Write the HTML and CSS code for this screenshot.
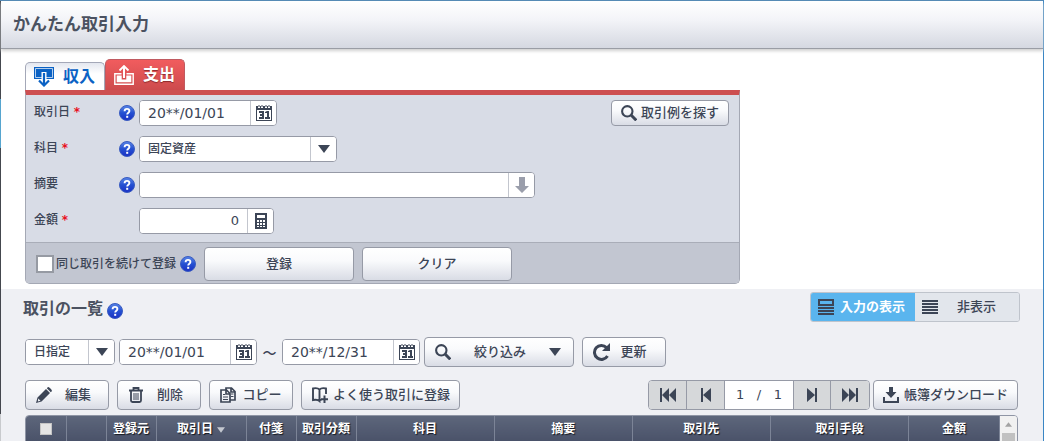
FILE: index.html
```html
<!DOCTYPE html>
<html lang="ja">
<head>
<meta charset="utf-8">
<meta name="viewport" content="width=device-width, initial-scale=1">
<title>かんたん取引入力</title>
<link rel="stylesheet" href="styles.css">
</head>
<body>
<svg class="symbols" aria-hidden="true">
  <defs>
    <linearGradient id="help-fill" x1="0" y1="0" x2="0" y2="1">
      <stop offset="0" stop-color="#5a86e6"/><stop offset=".5" stop-color="#2450d2"/><stop offset="1" stop-color="#1a30c4"/>
    </linearGradient>
    <symbol id="help" viewBox="0 0 16 16">
      <circle cx="8" cy="8" r="7.500" fill="url(#help-fill)" stroke="#3a5cc0"/>
      <path d="M5.600 6.300C5.600 4.700 6.600 3.900 8 3.900s2.400.8 2.400 2.100c0 1.700-2.200 1.700-2.200 3.600" fill="none" stroke="#fff" stroke-width="1.900"/>
      <rect x="7.200" y="10.800" width="2" height="2" fill="#fff"/>
    </symbol>
    <symbol id="calendar" viewBox="0 0 16 16">
      <path d="M0 1h2v2h2V1h1v2h2V1h2v2h2V1h1v2h2V1h2v15H0z" fill="#3c4556"/>
      <path d="M1 5h14v10H1z" fill="#fff"/>
      <path d="M3 6h5v8H3v-2h3v-1H4V9h2V8H3zM9 7l2-1h2v6h1v2H9v-2h2V8H9z" fill="#3c4556"/>
      <path d="M3 0v2M6 0v2M10 0v2M13 0v2" stroke="#3c4556"/>
    </symbol>
    <symbol id="calculator" viewBox="0 0 12 16">
      <path d="M0 0h12v16H0z" fill="#3c4556"/>
      <path d="M2 2h8v3H2zM2 7h2v2H2zM5 7h2v2H5zM8 7h2v2H8zM2 10h2v2H2zM5 10h2v2H5zM8 10h2v2H8zM2 13h2v1H2zM5 13h2v1H5zM8 13h2v1H8z" fill="#fff"/>
    </symbol>
    <symbol id="down-arrow" viewBox="0 0 14 16"><path d="M4 0h6v9h4l-7 7-7-7h4z" fill="#9a9eab"/></symbol>
    <symbol id="triangle" viewBox="0 0 12 8"><path d="M0 0h12L6 8z" fill="currentColor"/></symbol>
    <symbol id="search" viewBox="0 0 16 16"><circle cx="6.300" cy="6.300" r="5.200" fill="none" stroke="currentColor" stroke-width="2.100"/><path d="M10.300 10.300l5 5" stroke="currentColor" stroke-width="3"/></symbol>
    <symbol id="income" viewBox="0 0 20 20">
      <path d="M0 0h20v12H0z" fill="#0b62c4"/>
      <path d="M1.500 1.500h17v9h-17z" fill="none" stroke="#fff" stroke-width=".7"/>
      <path d="M7.500 5h5v7h-5z" fill="#fff"/>
      <path d="M10 6v11" stroke="#0b62c4" stroke-width="2.200"/>
      <path d="M5 13.500l5 5 5-5" fill="none" stroke="#0b62c4" stroke-width="2.200"/>
    </symbol>
    <symbol id="expense" viewBox="0 0 20 20">
      <path d="M7.500 8.700H.8v10.500h18.400V8.700h-6.700" fill="none" stroke="#fff" stroke-width="1.400"/>
      <path d="M2.700 10.500h5v4h4.600v-4h5v6.800H2.700z" fill="#fff"/>
      <path d="M10 13V2" stroke="#fff" stroke-width="2"/>
      <path d="M5.500 5.500L10 1l4.500 4.500" fill="none" stroke="#fff" stroke-width="1.800"/>
    </symbol>
    <symbol id="pencil" viewBox="0 0 16 16"><path d="M0 16l1.500-5.500L10 2l4 4-8.500 8.500zM10.800 1.200L12 0c1 0 4 2.500 4 4l-1.200 1.200z" fill="currentColor"/><path d="M2.300 11.500l2.200 2.200-2.700.8z" fill="#eef0f4"/></symbol>
    <symbol id="trash" viewBox="0 0 14 16"><path d="M0 3.500h14" stroke="currentColor" stroke-width="2"/><path d="M4.500 3V1h5v2M2 4v9.500q0 1.500 1.500 1.500h7q1.500 0 1.500-1.500V4" fill="none" stroke="currentColor" stroke-width="1.800"/><path d="M5 6v7M7 6v7M9 6v7" stroke="currentColor"/></symbol>
    <symbol id="copy" viewBox="0 0 16 16"><path d="M6 3V1h5.500L15 4.500V13h-5M11 1v4h4M1 3h5.500L10 6.500V15H1zM6 3v4h4" fill="none" stroke="currentColor" stroke-width="1.700"/><path d="M3 7.500h2M3 10h5M3 12.500h5M11 7h2.500M11 9.500h2.500" stroke="currentColor" stroke-width="1.200"/></symbol>
    <symbol id="book-plus" viewBox="0 0 16 16"><path d="M7.500 14V2.500C6 1 3 1 1 1.500V13c2.500-.5 5-.5 6.500 1zM7.500 2.500C9 1 12 1 14 1.500V7M7.500 13.500l2-1" fill="none" stroke="currentColor" stroke-width="1.900"/><path d="M12.500 8.500V16M9 12.200h7" stroke="currentColor" stroke-width="2"/></symbol>
    <symbol id="refresh" viewBox="0 0 18 18"><path d="M14.500 4.500A7 7 0 1 0 15.500 13" fill="none" stroke="currentColor" stroke-width="3"/><path d="M18 0v8h-8z" fill="currentColor"/></symbol>
    <symbol id="download" viewBox="0 0 16 16"><path d="M6 0h4v5h3.500L8 11 2.500 5H6z" fill="currentColor"/><path d="M1 10v5h14v-5" fill="none" stroke="currentColor" stroke-width="2"/></symbol>
    <symbol id="form-lines" viewBox="0 0 16 16"><path d="M1 1h14v5H1z" fill="none" stroke="currentColor" stroke-width="2"/><path d="M0 9h16M0 12h16M0 15h16" stroke="currentColor" stroke-width="2"/></symbol>
    <symbol id="lines" viewBox="0 0 16 16"><path d="M0 2h16M0 5h16M0 8h16M0 11h16M0 14h16" stroke="currentColor" stroke-width="2"/></symbol>
    <symbol id="first" viewBox="0 0 16 14"><path d="M0 0h2v14H0zM9 0v14L2 7zM16 0v14L9 7z" fill="currentColor"/></symbol>
    <symbol id="prev" viewBox="0 0 10 14"><path d="M0 0h2v14H0zM10 0v14L2 7z" fill="currentColor"/></symbol>
  </defs>
</svg>

<div class="window">
  <header class="titlebar"><h1 class="title">かんたん取引入力</h1></header>

  <main class="main">
    <form class="entry">
      <div class="tabs">
        <button type="button" class="tab tab-income"><svg class="icon20"><use href="#income"/></svg>収入</button>
        <button type="button" class="tab tab-expense"><svg class="icon20"><use href="#expense"/></svg>支出</button>
      </div>
      <div class="panel">
        <div class="fields">
          <div class="rows">
            <div class="row">
              <label class="label" for="date">取引日 <span class="required">*</span></label>
              <svg class="help"><use href="#help"/></svg>
              <span class="field field-date"><input id="date" class="input date" value="20**/01/01"><button type="button" class="addon" aria-label="カレンダー"><svg class="icon16"><use href="#calendar"/></svg></button></span>
            </div>
            <div class="row">
              <label class="label" for="account">科目 <span class="required">*</span></label>
              <svg class="help"><use href="#help"/></svg>
              <span class="field field-account"><select id="account" class="input select"><option>固定資産</option></select><span class="addon"><svg class="caret"><use href="#triangle"/></svg></span></span>
            </div>
            <div class="row">
              <label class="label" for="memo">摘要</label>
              <svg class="help"><use href="#help"/></svg>
              <span class="field field-memo"><input id="memo" class="input"><button type="button" class="addon" aria-label="候補"><svg class="icon16"><use href="#down-arrow"/></svg></button></span>
            </div>
            <div class="row">
              <label class="label" for="amount">金額 <span class="required">*</span></label>
              <span class="help"></span>
              <span class="field field-amount"><input id="amount" class="input amount" value="0"><button type="button" class="addon" aria-label="電卓"><svg class="icon16"><use href="#calculator"/></svg></button></span>
            </div>
          </div>
          <button type="button" class="button button-example"><svg class="icon16"><use href="#search"/></svg>取引例を探す</button>
        </div>
        <div class="actions">
          <input type="checkbox" id="repeat" class="check">
          <label class="repeat-label" for="repeat">同じ取引を続けて登録</label>
          <svg class="help"><use href="#help"/></svg>
          <button type="button" class="button button-wide">登録</button>
          <button type="button" class="button button-wide">クリア</button>
        </div>
      </div>
    </form>
  </main>

  <section class="list">
    <div class="list-head">
      <h2 class="list-title">取引の一覧</h2>
      <svg class="help"><use href="#help"/></svg>
      <div class="toggle">
        <button type="button" class="toggle-item toggle-on" aria-pressed="true"><svg class="icon16"><use href="#form-lines"/></svg><span class="caption">入力の表示</span></button>
        <button type="button" class="toggle-item" aria-pressed="false"><svg class="icon16"><use href="#lines"/></svg><span class="caption">非表示</span></button>
      </div>
    </div>

    <div class="filters">
      <span class="field field-range"><select class="input select" aria-label="期間"><option>日指定</option></select><span class="addon"><svg class="caret"><use href="#triangle"/></svg></span></span>
      <span class="field field-date"><input class="input date" aria-label="開始日" value="20**/01/01"><button type="button" class="addon" aria-label="カレンダー"><svg class="icon16"><use href="#calendar"/></svg></button></span>
      <span class="tilde">～</span>
      <span class="field field-date"><input class="input date" aria-label="終了日" value="20**/12/31"><button type="button" class="addon" aria-label="カレンダー"><svg class="icon16"><use href="#calendar"/></svg></button></span>
      <button type="button" class="button button-filter"><svg class="icon16"><use href="#search"/></svg><span class="caption">絞り込み</span><svg class="caret"><use href="#triangle"/></svg></button>
      <button type="button" class="button button-refresh"><svg class="icon18"><use href="#refresh"/></svg><span class="caption">更新</span></button>
    </div>

    <div class="toolbar">
      <button type="button" class="button button-tool"><svg class="icon16"><use href="#pencil"/></svg><span class="caption">編集</span></button>
      <button type="button" class="button button-tool"><svg class="icon16"><use href="#trash"/></svg><span class="caption">削除</span></button>
      <button type="button" class="button button-tool"><svg class="icon16"><use href="#copy"/></svg><span class="caption">コピー</span></button>
      <button type="button" class="button button-tool button-favorite"><svg class="icon16"><use href="#book-plus"/></svg><span class="caption">よく使う取引に登録</span></button>
      <div class="pager">
        <button type="button" class="page-button" aria-label="最初"><svg class="icon16"><use href="#first"/></svg></button>
        <button type="button" class="page-button" aria-label="前"><svg class="icon16 icon-step"><use href="#prev"/></svg></button>
        <span class="page-count"><span>1</span><span>/</span><span>1</span></span>
        <button type="button" class="page-button" aria-label="次"><svg class="icon16 icon-step flip"><use href="#prev"/></svg></button>
        <button type="button" class="page-button" aria-label="最後"><svg class="icon16 flip"><use href="#first"/></svg></button>
      </div>
      <button type="button" class="button button-download"><svg class="icon16"><use href="#download"/></svg>帳簿ダウンロード</button>
    </div>

    <div class="grid">
      <table class="table">
        <colgroup><col class="col-s"><col class="col-s"><col class="col-m"><col class="col-date"><col class="col-m"><col class="col-kind"><col><col><col><col><col class="col-amount"></colgroup>
        <thead>
          <tr>
            <th><input type="checkbox" class="check-all" aria-label="すべて選択"></th>
            <th></th>
            <th>登録元</th>
            <th>取引日 <svg class="sort"><use href="#triangle"/></svg></th>
            <th>付箋</th>
            <th>取引分類</th>
            <th>科目</th>
            <th>摘要</th>
            <th>取引先</th>
            <th>取引手段</th>
            <th>金額</th>
          </tr>
        </thead>
      </table>
      <div class="scroll"><svg class="scroll-up"><use href="#triangle"/></svg><span class="scroll-thumb"></span></div>
    </div>
  </section>
</div>
</body>
</html>
```

FILE: styles.css
```css
* { box-sizing: border-box; }

body {
  margin: 0;
  height: 100vh;
  overflow: hidden;
  background: #fff;
  color: #3c4556;
  font: 500 12px/18px "DejaVu Sans", "Noto Sans CJK JP", sans-serif;
}

button, input, select {
  margin: 0;
  padding: 0;
  border: 0;
  color: inherit;
  font: inherit;
  border-radius: 0;
}

.symbols { position: absolute; width: 0; height: 0; }

.window {
  display: flex;
  flex-direction: column;
  min-height: 100vh;
  padding-left: 1px;
  border-top: 1px solid #4f86b4;
  border-right: 1px solid #3a86c4;
  background: linear-gradient(#44474e 22%, #56a5cf 22%, #56a5cf 33%, #44474e 33%, #44474e 93%, #c8cacd 93%);
}

.titlebar {
  position: relative;
  display: flex;
  align-items: center;
  height: 48px;
  padding: 0 12px 2px;
  background: linear-gradient(#fff, #f3f4f8 40%, #d5d8e1);
  border-bottom: 1px solid #9a9da5;
  box-shadow: 0 2px 3px #d0d0d0;
}

.title { margin: 0; font-size: 17px; line-height: 24px; font-weight: 700; color: #4b5261; }

.main { padding: 10px 24px 5px; background: #fff; }
.entry { max-width: 715px; }
.tabs { display: flex; align-items: flex-end; }

.tab {
  display: flex;
  align-items: center;
  gap: 9px;
  width: 80px;
  height: 28px;
  padding-left: 8px;
  border: 1px solid #a4a8b8;
  border-bottom: 0;
  border-radius: 5px 5px 0 0;
  font-size: 16px;
  font-weight: 700;
}

.tab-income { background: linear-gradient(#e4e7ef, #fff 40%); color: #0b62c4; }
.tab-expense { height: 31px; border-color: #c05a60; background: linear-gradient(#f15c5e, #cd4b4d); color: #fff; text-shadow: 0 1px 1px #8c2b2d; }

.panel {
  border: 1px solid #a4a8b4;
  border-top: 5px solid #cd4f51;
  border-radius: 0 0 5px 5px;
  background: #d8dce6;
}

.fields {
  display: flex;
  justify-content: space-between;
  align-items: flex-start;
  padding: 5px 10px 8px 8px;
}

.rows { display: grid; gap: 10px; }
.row { display: flex; align-items: center; }
.label { width: 85px; line-height: 20px; padding-bottom: 2px; }
.required { color: #e8101c; font-weight: 700; }
.help { flex: none; width: 16px; height: 16px; }
.row .help { margin-right: 4px; }

.field {
  display: flex;
  height: 26px;
  background: #fff;
  border: 1px solid #969aa6;
  border-radius: 4px;
  overflow: hidden;
}

.field-date { width: 138px; }
.field-account { width: 198px; }
.field-memo { width: 396px; }
.field-amount { width: 135px; }
.field-range { width: 90px; }

.input {
  flex: 1;
  min-width: 0;
  padding: 0 8px;
  background: #fff;
  outline: 0;
  font-size: 13px;
}

.date { font-size: 14px; }
.select { appearance: none; font-size: 12px; }
.amount { text-align: right; }

.addon {
  display: flex;
  flex: none;
  align-items: center;
  justify-content: center;
  width: 26px;
  background: #fff;
  border-left: 1px solid #c3c6ce;
}

.icon16 { flex: none; width: 16px; height: 16px; }
.icon18 { flex: none; width: 18px; height: 18px; }
.icon20 { flex: none; width: 20px; height: 20px; }
.caret { flex: none; width: 12px; height: 8px; }

.button {
  display: flex;
  align-items: center;
  justify-content: center;
  height: 30px;
  border: 1px solid #969aa6;
  border-radius: 4px;
  background: linear-gradient(#fff, #f9fafc 40%, #d9dce5);
  font-size: 13px;
  line-height: 20px;
  white-space: nowrap;
}

.button-example { gap: 4px; width: 118px; height: 26px; }

.actions {
  display: flex;
  align-items: center;
  padding: 4px 10px 2px;
  border-top: 1px solid #a9adb8;
  border-radius: 0 0 4px 4px;
  background: #c2c6d1;
}

.check {
  appearance: none;
  width: 18px;
  height: 18px;
  background: #fff;
  border: 2px solid #969aa3;
}

.repeat-label { margin: 0 4px 0 2px; }
.button-wide { width: 150px; height: 34px; margin-left: 8px; }

.list {
  flex: 1;
  padding: 3px 25px 0 24px;
  background: #eff0f4;
}

.list-head { display: flex; align-items: center; }
.list-title { margin: 0 4px 0 -2px; padding-top: 4px; font-size: 16px; line-height: 24px; font-weight: 700; color: #4b5261; }
.list-head .help { margin-top: 8px; }

.toggle {
  display: flex;
  width: 210px;
  height: 30px;
  margin: 0 -2px 0 auto;
  border: 1px solid #bfc4cc;
  border-radius: 3px;
  overflow: hidden;
}

.toggle-item {
  display: flex;
  flex: 1;
  align-items: center;
  padding: 0 4px 0 7px;
  background: #e2e6ec;
  font-size: 13px;
}

.toggle-on { background: #5ab5ee; }
.toggle-on .caption { color: #fff; font-weight: 700; }
.caption { flex: 1; text-align: center; }

.filters { display: flex; align-items: center; gap: 4px; margin-top: 15px; }
.tilde { width: 17px; text-align: center; font: 500 14px/18px "Noto Sans CJK JP", sans-serif; }
.button-filter { width: 150px; padding: 0 12px 0 10px; }
.button-refresh { width: 84px; margin-left: 4px; padding: 0 8px 0 9px; }

.toolbar { display: flex; gap: 8px; margin-top: 13px; }
.button-tool { width: 84px; padding: 0 4px 0 10px; }
.button-favorite { width: 159px; }
.button-download { gap: 5px; width: 145px; margin-left: -5px; }

.pager {
  display: flex;
  width: 222px;
  height: 30px;
  margin-left: auto;
  background: #fff;
  border: 1px solid #969aa6;
  border-radius: 4px;
  overflow: hidden;
}

.page-button {
  display: flex;
  align-items: center;
  justify-content: center;
  width: 38px;
  background: #d6d8da;
  border-right: 1px solid #969aa6;
}

.page-count + .page-button { border-left: 1px solid #969aa6; }
.page-button:last-child { border-right: 0; }
.page-count { display: flex; flex: 1; align-items: center; justify-content: space-between; padding: 0 11px; font-size: 13px; }
.icon-step { height: 14px; }
.flip { transform: scaleX(-1); }

.grid {
  display: flex;
  margin-top: 5px;
  border: 1px solid #8f95a5;
  border-radius: 4px 4px 0 0;
  overflow: hidden;
}

.table {
  flex: 1;
  width: 100%;
  table-layout: fixed;
  border-collapse: collapse;
}

.table th {
  height: 28px;
  padding: 0 0 2px;
  border-right: 1px solid #7c8497;
  background: linear-gradient(#5d667b, #485067);
  color: #fff;
  font-weight: 700;
  text-shadow: 1px 1px 1px #15181f;
  white-space: nowrap;
}

.col-s { width: 40px; }
.col-m { width: 50px; }
.col-date { width: 90px; }
.col-kind { width: 60px; }
.col-amount { width: 91px; }

.check-all {
  display: block;
  appearance: none;
  width: 12px;
  height: 12px;
  margin: 0 auto;
  background: #e4e4e4;
  border: 1px solid #c4c4c4;
}

.sort { width: 8px; height: 6px; color: #c4c8d0; }

.scroll {
  display: flex;
  flex-direction: column;
  align-items: center;
  width: 17px;
  padding-top: 6px;
  background: #f1f1f1;
}

.scroll-up { width: 7px; height: 5px; color: #a3a3a3; transform: rotate(180deg); }
.scroll-thumb { flex: 1; width: 13px; margin-top: 6px; background: #c1c1c1; }
```
